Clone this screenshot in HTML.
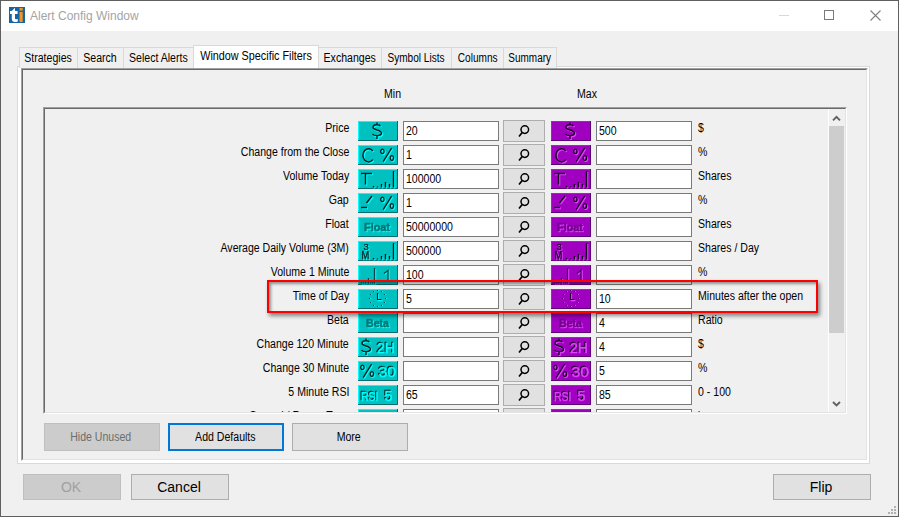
<!DOCTYPE html>
<html><head><meta charset="utf-8"><style>
*{box-sizing:border-box;margin:0;padding:0}
html,body{width:899px;height:517px;overflow:hidden;background:#f0f0f0;font-family:"Liberation Sans",sans-serif;position:relative}
.a{position:absolute}
.t{display:inline-block;transform:scaleX(0.88);white-space:nowrap}
.win{position:absolute;left:0;top:0;width:899px;height:517px;background:#f0f0f0;overflow:hidden}
.title{position:absolute;left:1px;top:1px;width:897px;height:30px;background:#fff}
.ttxt{position:absolute;left:29px;top:8px;font-size:12px;color:#a4a4a4;line-height:14px;white-space:nowrap}
.tab{position:absolute;top:47px;height:21px;border:1px solid #d9d9d9;border-bottom:none;background:#f0f0f0;font-size:12px;line-height:14px;padding-top:3px;text-align:center;white-space:nowrap;color:#000}
.tab.sel{top:45px;height:23px;background:#fff;padding-top:3px;z-index:2}
.lab{position:absolute;right:550px;font-size:12px;line-height:14px;padding-top:0px;white-space:nowrap;color:#000;text-align:right}
.unit{position:absolute;left:698px;font-size:12px;line-height:14px;padding-top:0px;white-space:nowrap;color:#000}
.tb{position:absolute;width:96px;height:20px;border:1px solid #7a7a7a;background:#fff;font-size:12px;line-height:14px;padding:2px 0 0 2px;white-space:nowrap;color:#000}
.mg{position:absolute;left:503px;width:42px;height:22px;border:1px solid #adadad;background:#e1e1e1;overflow:hidden}
.mg svg{left:-1px;top:-1px}
.btn{position:absolute;border:1px solid #adadad;background:#e1e1e1;text-align:center;padding-right:2px;white-space:nowrap;color:#000}
</style></head><body>
<div class="win">
 <div class="title">
  <svg class="a" style="left:8px;top:6px" width="16" height="16"><rect width="16" height="16" fill="#1565a5"/>
   <path d="M1,4 H2.8 L6,0.8 V4 H8.6 V7 H6 V11.3 C6,12.4 7,12.6 8.8,12 V14.4 C5.5,15.5 2.8,15 2.8,12 V7 H1 Z" fill="#fff"/><rect x="10.5" y="1" width="3.2" height="2.6" fill="#f7941d"/><rect x="10.5" y="5" width="3.2" height="10" fill="#f7941d"/></svg>
  <div class="ttxt">Alert Config Window</div>
  <div class="a" style="left:778px;top:14px;width:10px;height:1px;background:#d9d9d9"></div>
  <div class="a" style="left:823px;top:9px;width:10px;height:10px;border:1px solid #7a7a7a"></div>
  <svg class="a" style="left:868px;top:8px" width="14" height="14"><path d="M1.5,1.5 L11.5,11.5 M11.5,1.5 L1.5,11.5" stroke="#7f7f7f" stroke-width="1.1"/></svg>
 </div>
 <!-- tab control border -->
 <div class="a" style="left:17px;top:66px;width:853px;height:398px;border:1px solid #d9d9d9;background:#fff"></div>
 <div class="tab" style="left:19px;width:59px"><span class="t" style="transform-origin:center">Strategies</span></div>
<div class="tab" style="left:77px;width:47px"><span class="t" style="transform-origin:center">Search</span></div>
<div class="tab" style="left:123px;width:71px"><span class="t" style="transform-origin:center">Select Alerts</span></div>
<div class="tab" style="left:318px;width:64px"><span class="t" style="transform-origin:center">Exchanges</span></div>
<div class="tab" style="left:381px;width:71px"><span class="t" style="transform-origin:center;transform:scaleX(0.84)">Symbol Lists</span></div>
<div class="tab" style="left:451px;width:53px"><span class="t" style="transform-origin:center;transform:scaleX(0.84)">Columns</span></div>
<div class="tab" style="left:503px;width:54px"><span class="t" style="transform-origin:center;transform:scaleX(0.83)">Summary</span></div>
 <div class="tab sel" style="left:193px;width:126px"><span class="t" style="transform-origin:center;transform:scaleX(0.9)">Window Specific Filters</span></div>
 <!-- fixed3d panel in tab page -->
 <div class="a" style="left:21px;top:68px;width:847px;height:393px;border:1px solid;border-color:#a0a0a0 #fff #fff #a0a0a0;z-index:3;background:#f0f0f0"></div>
 <div class="a" style="left:22px;top:69px;width:845px;height:391px;border:1px solid;border-color:#696969 #e3e3e3 #e3e3e3 #696969;z-index:3"></div>
 <div class="a" style="left:384px;top:87px;font-size:12px;line-height:14px;z-index:4"><span class="t" style="transform-origin:left">Min</span></div>
 <div class="a" style="left:577px;top:87px;font-size:12px;line-height:14px;z-index:4"><span class="t" style="transform-origin:left">Max</span></div>
 <div class="a" style="left:0;top:0;width:899px;height:517px;z-index:5">
 <!-- scroll panel -->
 <div class="a" style="left:43px;top:107px;width:804px;height:307px;border:1px solid;border-color:#a0a0a0 #fff #fff #a0a0a0"></div>
 <div class="a" style="left:44px;top:108px;width:802px;height:305px;border:1px solid;border-color:#696969 #e3e3e3 #e3e3e3 #696969"></div>
 <div class="a" style="left:45px;top:109px;width:783px;height:303px;overflow:hidden">
  <div class="a" style="left:-45px;top:-109px;width:899px;height:517px">
<div class="lab" style="top:121px"><span class="t" style="transform-origin:right">Price</span></div>
<svg class="a" style="left:358px;top:121px;will-change:transform" width="40" height="20" font-family="Liberation Sans"><rect width="40" height="20" fill="#00c0c0"/><path d="M0.5,19 V0.5 H39" stroke="#00ffff" fill="none"/><path d="M0,19.5 H39.5 V0" stroke="#006e6e" fill="none"/><path d="M22.5,5.2 C21.5,3.2 15.0,3 15.0,6.5 C15.0,9.2 23.5,8.8 23.5,12 C23.5,15.3 16.0,15.4 14.5,13 M19.0,1.5 V3.6 M19.0,15 V18" transform="translate(0.9,0.9)" stroke="#00ffff" stroke-width="1.7999999999999998" fill="none"/><path d="M22.5,5.2 C21.5,3.2 15.0,3 15.0,6.5 C15.0,9.2 23.5,8.8 23.5,12 C23.5,15.3 16.0,15.4 14.5,13 M19.0,1.5 V3.6 M19.0,15 V18" stroke="#001e1e" stroke-width="1.4" fill="none"/></svg>
<div class="tb" style="left:403px;top:121px"><span class="t" style="transform-origin:left">20</span></div>
<div class="mg" style="top:120px"><svg class="a" style="left:0;top:0" width="43" height="22"><circle cx="20.8" cy="8.6" r="3.8" stroke="#000" stroke-width="1.5" fill="none"/><path d="M18.2,11.4 L15,15.6" stroke="#000" stroke-width="1.6"/></svg></div>
<svg class="a" style="left:551px;top:121px;will-change:transform" width="40" height="20" font-family="Liberation Sans"><rect width="40" height="20" fill="#a000c0"/><path d="M0.5,19 V0.5 H39" stroke="#d000ff" fill="none"/><path d="M0,19.5 H39.5 V0" stroke="#5e0078" fill="none"/><path d="M22.5,5.2 C21.5,3.2 15.0,3 15.0,6.5 C15.0,9.2 23.5,8.8 23.5,12 C23.5,15.3 16.0,15.4 14.5,13 M19.0,1.5 V3.6 M19.0,15 V18" transform="translate(0.9,0.9)" stroke="#e040ff" stroke-width="1.7999999999999998" fill="none"/><path d="M22.5,5.2 C21.5,3.2 15.0,3 15.0,6.5 C15.0,9.2 23.5,8.8 23.5,12 C23.5,15.3 16.0,15.4 14.5,13 M19.0,1.5 V3.6 M19.0,15 V18" stroke="#1e0028" stroke-width="1.4" fill="none"/></svg>
<div class="tb" style="left:596px;top:121px"><span class="t" style="transform-origin:left">500</span></div>
<div class="unit" style="top:121px"><span class="t" style="transform-origin:left">$</span></div>
<div class="lab" style="top:145px"><span class="t" style="transform-origin:right">Change from the Close</span></div>
<svg class="a" style="left:358px;top:145px;will-change:transform" width="40" height="20" font-family="Liberation Sans"><rect width="40" height="20" fill="#00c0c0"/><path d="M0.5,19 V0.5 H39" stroke="#00ffff" fill="none"/><path d="M0,19.5 H39.5 V0" stroke="#006e6e" fill="none"/><path d="M14.8,6 A5.6,6.6 0 1 0 14.8,14.6" transform="translate(0.9,0.9)" stroke="#00ffff" stroke-width="1.9" fill="none"/><path d="M14.8,6 A5.6,6.6 0 1 0 14.8,14.6" stroke="#001e1e" stroke-width="1.5" fill="none"/><path d="M24.4,4.1 a1.7,2.3 0 1 0 0.01,0 Z M25.2,16.6 L33.6,3.2 M33.9,10.7 a1.7,2.3 0 1 0 0.01,0 Z" transform="translate(0.9,0.9)" stroke="#00ffff" stroke-width="1.7000000000000002" fill="none"/><path d="M24.4,4.1 a1.7,2.3 0 1 0 0.01,0 Z M25.2,16.6 L33.6,3.2 M33.9,10.7 a1.7,2.3 0 1 0 0.01,0 Z" stroke="#001e1e" stroke-width="1.3" fill="none"/></svg>
<div class="tb" style="left:403px;top:145px"><span class="t" style="transform-origin:left">1</span></div>
<div class="mg" style="top:144px"><svg class="a" style="left:0;top:0" width="43" height="22"><circle cx="20.8" cy="8.6" r="3.8" stroke="#000" stroke-width="1.5" fill="none"/><path d="M18.2,11.4 L15,15.6" stroke="#000" stroke-width="1.6"/></svg></div>
<svg class="a" style="left:551px;top:145px;will-change:transform" width="40" height="20" font-family="Liberation Sans"><rect width="40" height="20" fill="#a000c0"/><path d="M0.5,19 V0.5 H39" stroke="#d000ff" fill="none"/><path d="M0,19.5 H39.5 V0" stroke="#5e0078" fill="none"/><path d="M14.8,6 A5.6,6.6 0 1 0 14.8,14.6" transform="translate(0.9,0.9)" stroke="#e040ff" stroke-width="1.9" fill="none"/><path d="M14.8,6 A5.6,6.6 0 1 0 14.8,14.6" stroke="#1e0028" stroke-width="1.5" fill="none"/><path d="M24.4,4.1 a1.7,2.3 0 1 0 0.01,0 Z M25.2,16.6 L33.6,3.2 M33.9,10.7 a1.7,2.3 0 1 0 0.01,0 Z" transform="translate(0.9,0.9)" stroke="#e040ff" stroke-width="1.7000000000000002" fill="none"/><path d="M24.4,4.1 a1.7,2.3 0 1 0 0.01,0 Z M25.2,16.6 L33.6,3.2 M33.9,10.7 a1.7,2.3 0 1 0 0.01,0 Z" stroke="#1e0028" stroke-width="1.3" fill="none"/></svg>
<div class="tb" style="left:596px;top:145px"><span class="t" style="transform-origin:left"></span></div>
<div class="unit" style="top:145px"><span class="t" style="transform-origin:left">%</span></div>
<div class="lab" style="top:169px"><span class="t" style="transform-origin:right">Volume Today</span></div>
<svg class="a" style="left:358px;top:169px;will-change:transform" width="40" height="20" font-family="Liberation Sans"><rect width="40" height="20" fill="#00c0c0"/><path d="M0.5,19 V0.5 H39" stroke="#00ffff" fill="none"/><path d="M0,19.5 H39.5 V0" stroke="#006e6e" fill="none"/><path d="M3,4.5 H14 M7.5,5 V15.5 M15.5,17 V18.5 M19.5,17.5 V18.5 M23.5,15 V18.5 M27.5,13 V18.5 M31.5,15 V18.5 M35.5,2 V18.5" transform="translate(0.9,0.9)" stroke="#00ffff" stroke-width="1.7999999999999998" fill="none"/><path d="M3,4.5 H14 M7.5,5 V15.5 M15.5,17 V18.5 M19.5,17.5 V18.5 M23.5,15 V18.5 M27.5,13 V18.5 M31.5,15 V18.5 M35.5,2 V18.5" stroke="#001e1e" stroke-width="1.4" fill="none"/></svg>
<div class="tb" style="left:403px;top:169px"><span class="t" style="transform-origin:left">100000</span></div>
<div class="mg" style="top:168px"><svg class="a" style="left:0;top:0" width="43" height="22"><circle cx="20.8" cy="8.6" r="3.8" stroke="#000" stroke-width="1.5" fill="none"/><path d="M18.2,11.4 L15,15.6" stroke="#000" stroke-width="1.6"/></svg></div>
<svg class="a" style="left:551px;top:169px;will-change:transform" width="40" height="20" font-family="Liberation Sans"><rect width="40" height="20" fill="#a000c0"/><path d="M0.5,19 V0.5 H39" stroke="#d000ff" fill="none"/><path d="M0,19.5 H39.5 V0" stroke="#5e0078" fill="none"/><path d="M3,4.5 H14 M7.5,5 V15.5 M15.5,17 V18.5 M19.5,17.5 V18.5 M23.5,15 V18.5 M27.5,13 V18.5 M31.5,15 V18.5 M35.5,2 V18.5" transform="translate(0.9,0.9)" stroke="#e040ff" stroke-width="1.7999999999999998" fill="none"/><path d="M3,4.5 H14 M7.5,5 V15.5 M15.5,17 V18.5 M19.5,17.5 V18.5 M23.5,15 V18.5 M27.5,13 V18.5 M31.5,15 V18.5 M35.5,2 V18.5" stroke="#1e0028" stroke-width="1.4" fill="none"/></svg>
<div class="tb" style="left:596px;top:169px"><span class="t" style="transform-origin:left"></span></div>
<div class="unit" style="top:169px"><span class="t" style="transform-origin:left">Shares</span></div>
<div class="lab" style="top:193px"><span class="t" style="transform-origin:right">Gap</span></div>
<svg class="a" style="left:358px;top:193px;will-change:transform" width="40" height="20" font-family="Liberation Sans"><rect width="40" height="20" fill="#00c0c0"/><path d="M0.5,19 V0.5 H39" stroke="#00ffff" fill="none"/><path d="M0,19.5 H39.5 V0" stroke="#006e6e" fill="none"/><path d="M3,14.5 H9 M8.5,10 L14,3" transform="translate(0.9,0.9)" stroke="#00ffff" stroke-width="1.9" fill="none"/><path d="M3,14.5 H9 M8.5,10 L14,3" stroke="#001e1e" stroke-width="1.5" fill="none"/><path d="M24.4,4.1 a1.7,2.3 0 1 0 0.01,0 Z M25.2,16.6 L33.6,3.2 M33.9,10.7 a1.7,2.3 0 1 0 0.01,0 Z" transform="translate(0.9,0.9)" stroke="#00ffff" stroke-width="1.7000000000000002" fill="none"/><path d="M24.4,4.1 a1.7,2.3 0 1 0 0.01,0 Z M25.2,16.6 L33.6,3.2 M33.9,10.7 a1.7,2.3 0 1 0 0.01,0 Z" stroke="#001e1e" stroke-width="1.3" fill="none"/></svg>
<div class="tb" style="left:403px;top:193px"><span class="t" style="transform-origin:left">1</span></div>
<div class="mg" style="top:192px"><svg class="a" style="left:0;top:0" width="43" height="22"><circle cx="20.8" cy="8.6" r="3.8" stroke="#000" stroke-width="1.5" fill="none"/><path d="M18.2,11.4 L15,15.6" stroke="#000" stroke-width="1.6"/></svg></div>
<svg class="a" style="left:551px;top:193px;will-change:transform" width="40" height="20" font-family="Liberation Sans"><rect width="40" height="20" fill="#a000c0"/><path d="M0.5,19 V0.5 H39" stroke="#d000ff" fill="none"/><path d="M0,19.5 H39.5 V0" stroke="#5e0078" fill="none"/><path d="M3,14.5 H9 M8.5,10 L14,3" transform="translate(0.9,0.9)" stroke="#e040ff" stroke-width="1.9" fill="none"/><path d="M3,14.5 H9 M8.5,10 L14,3" stroke="#1e0028" stroke-width="1.5" fill="none"/><path d="M24.4,4.1 a1.7,2.3 0 1 0 0.01,0 Z M25.2,16.6 L33.6,3.2 M33.9,10.7 a1.7,2.3 0 1 0 0.01,0 Z" transform="translate(0.9,0.9)" stroke="#e040ff" stroke-width="1.7000000000000002" fill="none"/><path d="M24.4,4.1 a1.7,2.3 0 1 0 0.01,0 Z M25.2,16.6 L33.6,3.2 M33.9,10.7 a1.7,2.3 0 1 0 0.01,0 Z" stroke="#1e0028" stroke-width="1.3" fill="none"/></svg>
<div class="tb" style="left:596px;top:193px"><span class="t" style="transform-origin:left"></span></div>
<div class="unit" style="top:193px"><span class="t" style="transform-origin:left">%</span></div>
<div class="lab" style="top:217px"><span class="t" style="transform-origin:right">Float</span></div>
<svg class="a" style="left:358px;top:217px;will-change:transform" width="40" height="20" font-family="Liberation Sans"><rect width="40" height="20" fill="#00c0c0"/><path d="M0.5,19 V0.5 H39" stroke="#00ffff" fill="none"/><path d="M0,19.5 H39.5 V0" stroke="#006e6e" fill="none"/><text x="7" y="15" fill="#00ffff" stroke="#00ffff" stroke-width="0.5" font-size="11.5" font-weight="bold" text-anchor="start" textLength="26" lengthAdjust="spacingAndGlyphs">Float</text><text x="6" y="14" fill="#007676" stroke="#007676" stroke-width="0.5" font-size="11.5" font-weight="bold" text-anchor="start" textLength="26" lengthAdjust="spacingAndGlyphs">Float</text></svg>
<div class="tb" style="left:403px;top:217px"><span class="t" style="transform-origin:left">50000000</span></div>
<div class="mg" style="top:216px"><svg class="a" style="left:0;top:0" width="43" height="22"><circle cx="20.8" cy="8.6" r="3.8" stroke="#000" stroke-width="1.5" fill="none"/><path d="M18.2,11.4 L15,15.6" stroke="#000" stroke-width="1.6"/></svg></div>
<svg class="a" style="left:551px;top:217px;will-change:transform" width="40" height="20" font-family="Liberation Sans"><rect width="40" height="20" fill="#a000c0"/><path d="M0.5,19 V0.5 H39" stroke="#d000ff" fill="none"/><path d="M0,19.5 H39.5 V0" stroke="#5e0078" fill="none"/><text x="7" y="15" fill="#e040ff" stroke="#e040ff" stroke-width="0.5" font-size="11.5" font-weight="bold" text-anchor="start" textLength="26" lengthAdjust="spacingAndGlyphs">Float</text><text x="6" y="14" fill="#74008e" stroke="#74008e" stroke-width="0.5" font-size="11.5" font-weight="bold" text-anchor="start" textLength="26" lengthAdjust="spacingAndGlyphs">Float</text></svg>
<div class="tb" style="left:596px;top:217px"><span class="t" style="transform-origin:left"></span></div>
<div class="unit" style="top:217px"><span class="t" style="transform-origin:left">Shares</span></div>
<div class="lab" style="top:241px"><span class="t" style="transform-origin:right">Average Daily Volume (3M)</span></div>
<svg class="a" style="left:358px;top:241px;will-change:transform" width="40" height="20" font-family="Liberation Sans"><rect width="40" height="20" fill="#00c0c0"/><path d="M0.5,19 V0.5 H39" stroke="#00ffff" fill="none"/><path d="M0,19.5 H39.5 V0" stroke="#006e6e" fill="none"/><text x="6.5" y="10" fill="#00ffff" stroke="#00ffff" stroke-width="0.2" font-size="9.5" font-weight="normal" text-anchor="start">3</text><text x="5.5" y="9" fill="#001e1e" stroke="#001e1e" stroke-width="0.2" font-size="9.5" font-weight="normal" text-anchor="start">3</text><text x="4.5" y="19" fill="#00ffff" stroke="#00ffff" stroke-width="0.3" font-size="10" font-weight="normal" text-anchor="start" textLength="7.8" lengthAdjust="spacingAndGlyphs">M</text><text x="3.5" y="18" fill="#001e1e" stroke="#001e1e" stroke-width="0.3" font-size="10" font-weight="normal" text-anchor="start" textLength="7.8" lengthAdjust="spacingAndGlyphs">M</text><path d="M15.5,17 V18.5 M19.5,17.5 V18.5 M23.5,15 V18.5 M27.5,13 V18.5 M31.5,15 V18.5 M35.5,2 V18.5" transform="translate(0.9,0.9)" stroke="#00ffff" stroke-width="1.7999999999999998" fill="none"/><path d="M15.5,17 V18.5 M19.5,17.5 V18.5 M23.5,15 V18.5 M27.5,13 V18.5 M31.5,15 V18.5 M35.5,2 V18.5" stroke="#001e1e" stroke-width="1.4" fill="none"/></svg>
<div class="tb" style="left:403px;top:241px"><span class="t" style="transform-origin:left">500000</span></div>
<div class="mg" style="top:240px"><svg class="a" style="left:0;top:0" width="43" height="22"><circle cx="20.8" cy="8.6" r="3.8" stroke="#000" stroke-width="1.5" fill="none"/><path d="M18.2,11.4 L15,15.6" stroke="#000" stroke-width="1.6"/></svg></div>
<svg class="a" style="left:551px;top:241px;will-change:transform" width="40" height="20" font-family="Liberation Sans"><rect width="40" height="20" fill="#a000c0"/><path d="M0.5,19 V0.5 H39" stroke="#d000ff" fill="none"/><path d="M0,19.5 H39.5 V0" stroke="#5e0078" fill="none"/><text x="6.5" y="10" fill="#e040ff" stroke="#e040ff" stroke-width="0.2" font-size="9.5" font-weight="normal" text-anchor="start">3</text><text x="5.5" y="9" fill="#1e0028" stroke="#1e0028" stroke-width="0.2" font-size="9.5" font-weight="normal" text-anchor="start">3</text><text x="4.5" y="19" fill="#e040ff" stroke="#e040ff" stroke-width="0.3" font-size="10" font-weight="normal" text-anchor="start" textLength="7.8" lengthAdjust="spacingAndGlyphs">M</text><text x="3.5" y="18" fill="#1e0028" stroke="#1e0028" stroke-width="0.3" font-size="10" font-weight="normal" text-anchor="start" textLength="7.8" lengthAdjust="spacingAndGlyphs">M</text><path d="M15.5,17 V18.5 M19.5,17.5 V18.5 M23.5,15 V18.5 M27.5,13 V18.5 M31.5,15 V18.5 M35.5,2 V18.5" transform="translate(0.9,0.9)" stroke="#e040ff" stroke-width="1.7999999999999998" fill="none"/><path d="M15.5,17 V18.5 M19.5,17.5 V18.5 M23.5,15 V18.5 M27.5,13 V18.5 M31.5,15 V18.5 M35.5,2 V18.5" stroke="#1e0028" stroke-width="1.4" fill="none"/></svg>
<div class="tb" style="left:596px;top:241px"><span class="t" style="transform-origin:left"></span></div>
<div class="unit" style="top:241px"><span class="t" style="transform-origin:left">Shares / Day</span></div>
<div class="lab" style="top:265px"><span class="t" style="transform-origin:right">Volume 1 Minute</span></div>
<svg class="a" style="left:358px;top:265px;will-change:transform" width="40" height="20" font-family="Liberation Sans"><rect width="40" height="20" fill="#00c0c0"/><path d="M0.5,19 V0.5 H39" stroke="#00ffff" fill="none"/><path d="M0,19.5 H39.5 V0" stroke="#006e6e" fill="none"/><path d="M3.5,17.5 V18.5 M5.5,17.5 V18.5 M7.5,17.5 V18.5 M10.5,13 V18.5 M12.5,17.5 V18.5 M14.5,17.5 V18.5 M16.5,3 V18.5 M26,8.5 L30,5.5 V15.5" transform="translate(0.9,0.9)" stroke="#00ffff" stroke-width="1.7000000000000002" fill="none"/><path d="M3.5,17.5 V18.5 M5.5,17.5 V18.5 M7.5,17.5 V18.5 M10.5,13 V18.5 M12.5,17.5 V18.5 M14.5,17.5 V18.5 M16.5,3 V18.5 M26,8.5 L30,5.5 V15.5" stroke="#004848" stroke-width="1.3" fill="none"/></svg>
<div class="tb" style="left:403px;top:265px"><span class="t" style="transform-origin:left">100</span></div>
<div class="mg" style="top:264px"><svg class="a" style="left:0;top:0" width="43" height="22"><circle cx="20.8" cy="8.6" r="3.8" stroke="#000" stroke-width="1.5" fill="none"/><path d="M18.2,11.4 L15,15.6" stroke="#000" stroke-width="1.6"/></svg></div>
<svg class="a" style="left:551px;top:265px;will-change:transform" width="40" height="20" font-family="Liberation Sans"><rect width="40" height="20" fill="#a000c0"/><path d="M0.5,19 V0.5 H39" stroke="#d000ff" fill="none"/><path d="M0,19.5 H39.5 V0" stroke="#5e0078" fill="none"/><path d="M3.5,17.5 V18.5 M5.5,17.5 V18.5 M7.5,17.5 V18.5 M10.5,13 V18.5 M12.5,17.5 V18.5 M14.5,17.5 V18.5 M16.5,3 V18.5 M26,8.5 L30,5.5 V15.5" transform="translate(0.9,0.9)" stroke="#e040ff" stroke-width="1.7000000000000002" fill="none"/><path d="M3.5,17.5 V18.5 M5.5,17.5 V18.5 M7.5,17.5 V18.5 M10.5,13 V18.5 M12.5,17.5 V18.5 M14.5,17.5 V18.5 M16.5,3 V18.5 M26,8.5 L30,5.5 V15.5" stroke="#480060" stroke-width="1.3" fill="none"/></svg>
<div class="tb" style="left:596px;top:265px"><span class="t" style="transform-origin:left"></span></div>
<div class="unit" style="top:265px"><span class="t" style="transform-origin:left">%</span></div>
<div class="lab" style="top:289px"><span class="t" style="transform-origin:right">Time of Day</span></div>
<svg class="a" style="left:358px;top:289px;will-change:transform" width="40" height="20" font-family="Liberation Sans"><rect width="40" height="20" fill="#00c0c0"/><path d="M0.5,19 V0.5 H39" stroke="#00ffff" fill="none"/><path d="M0,19.5 H39.5 V0" stroke="#006e6e" fill="none"/><rect x="28.0" y="9.0" width="1" height="1" fill="#00ffff"/><rect x="27.0" y="9.0" width="1" height="1" fill="#004848"/><rect x="26.9" y="13.0" width="1" height="1" fill="#00ffff"/><rect x="25.9" y="13.0" width="1" height="1" fill="#004848"/><rect x="24.0" y="15.9" width="1" height="1" fill="#00ffff"/><rect x="23.0" y="15.9" width="1" height="1" fill="#004848"/><rect x="20.0" y="17.0" width="1" height="1" fill="#00ffff"/><rect x="19.0" y="17.0" width="1" height="1" fill="#004848"/><rect x="16.0" y="15.9" width="1" height="1" fill="#00ffff"/><rect x="15.0" y="15.9" width="1" height="1" fill="#004848"/><rect x="13.1" y="13.0" width="1" height="1" fill="#00ffff"/><rect x="12.1" y="13.0" width="1" height="1" fill="#004848"/><rect x="12.0" y="9.0" width="1" height="1" fill="#00ffff"/><rect x="11.0" y="9.0" width="1" height="1" fill="#004848"/><rect x="13.1" y="5.0" width="1" height="1" fill="#00ffff"/><rect x="12.1" y="5.0" width="1" height="1" fill="#004848"/><rect x="16.0" y="2.1" width="1" height="1" fill="#00ffff"/><rect x="15.0" y="2.1" width="1" height="1" fill="#004848"/><rect x="20.0" y="1.0" width="1" height="1" fill="#00ffff"/><rect x="19.0" y="1.0" width="1" height="1" fill="#004848"/><rect x="24.0" y="2.1" width="1" height="1" fill="#00ffff"/><rect x="23.0" y="2.1" width="1" height="1" fill="#004848"/><rect x="26.9" y="5.0" width="1" height="1" fill="#00ffff"/><rect x="25.9" y="5.0" width="1" height="1" fill="#004848"/><path d="M19.5,4 V10.5 H23.5" transform="translate(0.9,0.9)" stroke="#00ffff" stroke-width="1.5" fill="none"/><path d="M19.5,4 V10.5 H23.5" stroke="#001e1e" stroke-width="1.1" fill="none"/></svg>
<div class="tb" style="left:403px;top:289px"><span class="t" style="transform-origin:left">5</span></div>
<div class="mg" style="top:288px"><svg class="a" style="left:0;top:0" width="43" height="22"><circle cx="20.8" cy="8.6" r="3.8" stroke="#000" stroke-width="1.5" fill="none"/><path d="M18.2,11.4 L15,15.6" stroke="#000" stroke-width="1.6"/></svg></div>
<svg class="a" style="left:551px;top:289px;will-change:transform" width="40" height="20" font-family="Liberation Sans"><rect width="40" height="20" fill="#a000c0"/><path d="M0.5,19 V0.5 H39" stroke="#d000ff" fill="none"/><path d="M0,19.5 H39.5 V0" stroke="#5e0078" fill="none"/><rect x="28.0" y="9.0" width="1" height="1" fill="#e040ff"/><rect x="27.0" y="9.0" width="1" height="1" fill="#480060"/><rect x="26.9" y="13.0" width="1" height="1" fill="#e040ff"/><rect x="25.9" y="13.0" width="1" height="1" fill="#480060"/><rect x="24.0" y="15.9" width="1" height="1" fill="#e040ff"/><rect x="23.0" y="15.9" width="1" height="1" fill="#480060"/><rect x="20.0" y="17.0" width="1" height="1" fill="#e040ff"/><rect x="19.0" y="17.0" width="1" height="1" fill="#480060"/><rect x="16.0" y="15.9" width="1" height="1" fill="#e040ff"/><rect x="15.0" y="15.9" width="1" height="1" fill="#480060"/><rect x="13.1" y="13.0" width="1" height="1" fill="#e040ff"/><rect x="12.1" y="13.0" width="1" height="1" fill="#480060"/><rect x="12.0" y="9.0" width="1" height="1" fill="#e040ff"/><rect x="11.0" y="9.0" width="1" height="1" fill="#480060"/><rect x="13.1" y="5.0" width="1" height="1" fill="#e040ff"/><rect x="12.1" y="5.0" width="1" height="1" fill="#480060"/><rect x="16.0" y="2.1" width="1" height="1" fill="#e040ff"/><rect x="15.0" y="2.1" width="1" height="1" fill="#480060"/><rect x="20.0" y="1.0" width="1" height="1" fill="#e040ff"/><rect x="19.0" y="1.0" width="1" height="1" fill="#480060"/><rect x="24.0" y="2.1" width="1" height="1" fill="#e040ff"/><rect x="23.0" y="2.1" width="1" height="1" fill="#480060"/><rect x="26.9" y="5.0" width="1" height="1" fill="#e040ff"/><rect x="25.9" y="5.0" width="1" height="1" fill="#480060"/><path d="M19.5,4 V10.5 H23.5" transform="translate(0.9,0.9)" stroke="#e040ff" stroke-width="1.5" fill="none"/><path d="M19.5,4 V10.5 H23.5" stroke="#1e0028" stroke-width="1.1" fill="none"/></svg>
<div class="tb" style="left:596px;top:289px"><span class="t" style="transform-origin:left">10</span></div>
<div class="unit" style="top:289px"><span class="t" style="transform-origin:left">Minutes after the open</span></div>
<div class="lab" style="top:313px"><span class="t" style="transform-origin:right">Beta</span></div>
<svg class="a" style="left:358px;top:313px;will-change:transform" width="40" height="20" font-family="Liberation Sans"><rect width="40" height="20" fill="#00c0c0"/><path d="M0.5,19 V0.5 H39" stroke="#00ffff" fill="none"/><path d="M0,19.5 H39.5 V0" stroke="#006e6e" fill="none"/><text x="9" y="15" fill="#00ffff" stroke="#00ffff" stroke-width="0.5" font-size="11.5" font-weight="bold" text-anchor="start" textLength="23" lengthAdjust="spacingAndGlyphs">Beta</text><text x="8" y="14" fill="#007676" stroke="#007676" stroke-width="0.5" font-size="11.5" font-weight="bold" text-anchor="start" textLength="23" lengthAdjust="spacingAndGlyphs">Beta</text></svg>
<div class="tb" style="left:403px;top:313px"><span class="t" style="transform-origin:left"></span></div>
<div class="mg" style="top:312px"><svg class="a" style="left:0;top:0" width="43" height="22"><circle cx="20.8" cy="8.6" r="3.8" stroke="#000" stroke-width="1.5" fill="none"/><path d="M18.2,11.4 L15,15.6" stroke="#000" stroke-width="1.6"/></svg></div>
<svg class="a" style="left:551px;top:313px;will-change:transform" width="40" height="20" font-family="Liberation Sans"><rect width="40" height="20" fill="#a000c0"/><path d="M0.5,19 V0.5 H39" stroke="#d000ff" fill="none"/><path d="M0,19.5 H39.5 V0" stroke="#5e0078" fill="none"/><text x="9" y="15" fill="#e040ff" stroke="#e040ff" stroke-width="0.5" font-size="11.5" font-weight="bold" text-anchor="start" textLength="23" lengthAdjust="spacingAndGlyphs">Beta</text><text x="8" y="14" fill="#74008e" stroke="#74008e" stroke-width="0.5" font-size="11.5" font-weight="bold" text-anchor="start" textLength="23" lengthAdjust="spacingAndGlyphs">Beta</text></svg>
<div class="tb" style="left:596px;top:313px"><span class="t" style="transform-origin:left">4</span></div>
<div class="unit" style="top:313px"><span class="t" style="transform-origin:left">Ratio</span></div>
<div class="lab" style="top:337px"><span class="t" style="transform-origin:right">Change 120 Minute</span></div>
<svg class="a" style="left:358px;top:337px;will-change:transform" width="40" height="20" font-family="Liberation Sans"><rect width="40" height="20" fill="#00c0c0"/><path d="M0.5,19 V0.5 H39" stroke="#00ffff" fill="none"/><path d="M0,19.5 H39.5 V0" stroke="#006e6e" fill="none"/><path d="M11.5,5.2 C10.5,3.2 4.0,3 4.0,6.5 C4.0,9.2 12.5,8.8 12.5,12 C12.5,15.3 5.0,15.4 3.5,13 M8.0,1.5 V3.6 M8.0,15 V18" transform="translate(0.9,0.9)" stroke="#00ffff" stroke-width="1.7999999999999998" fill="none"/><path d="M11.5,5.2 C10.5,3.2 4.0,3 4.0,6.5 C4.0,9.2 12.5,8.8 12.5,12 C12.5,15.3 5.0,15.4 3.5,13 M8.0,1.5 V3.6 M8.0,15 V18" stroke="#001e1e" stroke-width="1.4" fill="none"/><text x="18" y="15" fill="#001e1e" stroke="#001e1e" stroke-width="0.5" font-size="14" font-weight="normal" text-anchor="start" textLength="18" lengthAdjust="spacingAndGlyphs">2H</text><text x="19" y="16" fill="#00ffff" stroke="#00ffff" stroke-width="0.5" font-size="14" font-weight="normal" text-anchor="start" textLength="18" lengthAdjust="spacingAndGlyphs">2H</text></svg>
<div class="tb" style="left:403px;top:337px"><span class="t" style="transform-origin:left"></span></div>
<div class="mg" style="top:336px"><svg class="a" style="left:0;top:0" width="43" height="22"><circle cx="20.8" cy="8.6" r="3.8" stroke="#000" stroke-width="1.5" fill="none"/><path d="M18.2,11.4 L15,15.6" stroke="#000" stroke-width="1.6"/></svg></div>
<svg class="a" style="left:551px;top:337px;will-change:transform" width="40" height="20" font-family="Liberation Sans"><rect width="40" height="20" fill="#a000c0"/><path d="M0.5,19 V0.5 H39" stroke="#d000ff" fill="none"/><path d="M0,19.5 H39.5 V0" stroke="#5e0078" fill="none"/><path d="M11.5,5.2 C10.5,3.2 4.0,3 4.0,6.5 C4.0,9.2 12.5,8.8 12.5,12 C12.5,15.3 5.0,15.4 3.5,13 M8.0,1.5 V3.6 M8.0,15 V18" transform="translate(0.9,0.9)" stroke="#e040ff" stroke-width="1.7999999999999998" fill="none"/><path d="M11.5,5.2 C10.5,3.2 4.0,3 4.0,6.5 C4.0,9.2 12.5,8.8 12.5,12 C12.5,15.3 5.0,15.4 3.5,13 M8.0,1.5 V3.6 M8.0,15 V18" stroke="#1e0028" stroke-width="1.4" fill="none"/><text x="18" y="15" fill="#1e0028" stroke="#1e0028" stroke-width="0.5" font-size="14" font-weight="normal" text-anchor="start" textLength="18" lengthAdjust="spacingAndGlyphs">2H</text><text x="19" y="16" fill="#e040ff" stroke="#e040ff" stroke-width="0.5" font-size="14" font-weight="normal" text-anchor="start" textLength="18" lengthAdjust="spacingAndGlyphs">2H</text></svg>
<div class="tb" style="left:596px;top:337px"><span class="t" style="transform-origin:left">4</span></div>
<div class="unit" style="top:337px"><span class="t" style="transform-origin:left">$</span></div>
<div class="lab" style="top:361px"><span class="t" style="transform-origin:right">Change 30 Minute</span></div>
<svg class="a" style="left:358px;top:361px;will-change:transform" width="40" height="20" font-family="Liberation Sans"><rect width="40" height="20" fill="#00c0c0"/><path d="M0.5,19 V0.5 H39" stroke="#00ffff" fill="none"/><path d="M0,19.5 H39.5 V0" stroke="#006e6e" fill="none"/><path d="M4.4,4.1 a1.7,2.3 0 1 0 0.01,0 Z M5.2,16.6 L13.6,3.2 M13.9,10.7 a1.7,2.3 0 1 0 0.01,0 Z" transform="translate(0.9,0.9)" stroke="#00ffff" stroke-width="1.7000000000000002" fill="none"/><path d="M4.4,4.1 a1.7,2.3 0 1 0 0.01,0 Z M5.2,16.6 L13.6,3.2 M13.9,10.7 a1.7,2.3 0 1 0 0.01,0 Z" stroke="#001e1e" stroke-width="1.3" fill="none"/><text x="19.5" y="15" fill="#001e1e" stroke="#001e1e" stroke-width="0.5" font-size="14" font-weight="normal" text-anchor="start" textLength="17.5" lengthAdjust="spacingAndGlyphs">30</text><text x="20.5" y="16" fill="#00ffff" stroke="#00ffff" stroke-width="0.5" font-size="14" font-weight="normal" text-anchor="start" textLength="17.5" lengthAdjust="spacingAndGlyphs">30</text></svg>
<div class="tb" style="left:403px;top:361px"><span class="t" style="transform-origin:left"></span></div>
<div class="mg" style="top:360px"><svg class="a" style="left:0;top:0" width="43" height="22"><circle cx="20.8" cy="8.6" r="3.8" stroke="#000" stroke-width="1.5" fill="none"/><path d="M18.2,11.4 L15,15.6" stroke="#000" stroke-width="1.6"/></svg></div>
<svg class="a" style="left:551px;top:361px;will-change:transform" width="40" height="20" font-family="Liberation Sans"><rect width="40" height="20" fill="#a000c0"/><path d="M0.5,19 V0.5 H39" stroke="#d000ff" fill="none"/><path d="M0,19.5 H39.5 V0" stroke="#5e0078" fill="none"/><path d="M4.4,4.1 a1.7,2.3 0 1 0 0.01,0 Z M5.2,16.6 L13.6,3.2 M13.9,10.7 a1.7,2.3 0 1 0 0.01,0 Z" transform="translate(0.9,0.9)" stroke="#e040ff" stroke-width="1.7000000000000002" fill="none"/><path d="M4.4,4.1 a1.7,2.3 0 1 0 0.01,0 Z M5.2,16.6 L13.6,3.2 M13.9,10.7 a1.7,2.3 0 1 0 0.01,0 Z" stroke="#1e0028" stroke-width="1.3" fill="none"/><text x="19.5" y="15" fill="#1e0028" stroke="#1e0028" stroke-width="0.5" font-size="14" font-weight="normal" text-anchor="start" textLength="17.5" lengthAdjust="spacingAndGlyphs">30</text><text x="20.5" y="16" fill="#e040ff" stroke="#e040ff" stroke-width="0.5" font-size="14" font-weight="normal" text-anchor="start" textLength="17.5" lengthAdjust="spacingAndGlyphs">30</text></svg>
<div class="tb" style="left:596px;top:361px"><span class="t" style="transform-origin:left">5</span></div>
<div class="unit" style="top:361px"><span class="t" style="transform-origin:left">%</span></div>
<div class="lab" style="top:385px"><span class="t" style="transform-origin:right">5 Minute RSI</span></div>
<svg class="a" style="left:358px;top:385px;will-change:transform" width="40" height="20" font-family="Liberation Sans"><rect width="40" height="20" fill="#00c0c0"/><path d="M0.5,19 V0.5 H39" stroke="#00ffff" fill="none"/><path d="M0,19.5 H39.5 V0" stroke="#006e6e" fill="none"/><text x="2" y="15" fill="#001e1e" stroke="#001e1e" stroke-width="0.5" font-size="13" font-weight="normal" text-anchor="start" textLength="17.5" lengthAdjust="spacingAndGlyphs">RSI</text><text x="3" y="16" fill="#00ffff" stroke="#00ffff" stroke-width="0.5" font-size="13" font-weight="normal" text-anchor="start" textLength="17.5" lengthAdjust="spacingAndGlyphs">RSI</text><text x="25.5" y="15" fill="#001e1e" stroke="#001e1e" stroke-width="0.5" font-size="14" font-weight="normal" text-anchor="start" textLength="8" lengthAdjust="spacingAndGlyphs">5</text><text x="26.5" y="16" fill="#00ffff" stroke="#00ffff" stroke-width="0.5" font-size="14" font-weight="normal" text-anchor="start" textLength="8" lengthAdjust="spacingAndGlyphs">5</text></svg>
<div class="tb" style="left:403px;top:385px"><span class="t" style="transform-origin:left">65</span></div>
<div class="mg" style="top:384px"><svg class="a" style="left:0;top:0" width="43" height="22"><circle cx="20.8" cy="8.6" r="3.8" stroke="#000" stroke-width="1.5" fill="none"/><path d="M18.2,11.4 L15,15.6" stroke="#000" stroke-width="1.6"/></svg></div>
<svg class="a" style="left:551px;top:385px;will-change:transform" width="40" height="20" font-family="Liberation Sans"><rect width="40" height="20" fill="#a000c0"/><path d="M0.5,19 V0.5 H39" stroke="#d000ff" fill="none"/><path d="M0,19.5 H39.5 V0" stroke="#5e0078" fill="none"/><text x="2" y="15" fill="#1e0028" stroke="#1e0028" stroke-width="0.5" font-size="13" font-weight="normal" text-anchor="start" textLength="17.5" lengthAdjust="spacingAndGlyphs">RSI</text><text x="3" y="16" fill="#e040ff" stroke="#e040ff" stroke-width="0.5" font-size="13" font-weight="normal" text-anchor="start" textLength="17.5" lengthAdjust="spacingAndGlyphs">RSI</text><text x="25.5" y="15" fill="#1e0028" stroke="#1e0028" stroke-width="0.5" font-size="14" font-weight="normal" text-anchor="start" textLength="8" lengthAdjust="spacingAndGlyphs">5</text><text x="26.5" y="16" fill="#e040ff" stroke="#e040ff" stroke-width="0.5" font-size="14" font-weight="normal" text-anchor="start" textLength="8" lengthAdjust="spacingAndGlyphs">5</text></svg>
<div class="tb" style="left:596px;top:385px"><span class="t" style="transform-origin:left">85</span></div>
<div class="unit" style="top:385px"><span class="t" style="transform-origin:left">0 - 100</span></div>
<div class="lab" style="top:409px"><span class="t" style="transform-origin:right">Spread / Range Type</span></div>
<svg class="a" style="left:358px;top:409px;will-change:transform" width="40" height="20" font-family="Liberation Sans"><rect width="40" height="20" fill="#00c0c0"/><path d="M0.5,19 V0.5 H39" stroke="#00ffff" fill="none"/><path d="M0,19.5 H39.5 V0" stroke="#006e6e" fill="none"/></svg>
<div class="tb" style="left:403px;top:409px"><span class="t" style="transform-origin:left"></span></div>
<div class="mg" style="top:408px"><svg class="a" style="left:0;top:0" width="43" height="22"><circle cx="20.8" cy="8.6" r="3.8" stroke="#000" stroke-width="1.5" fill="none"/><path d="M18.2,11.4 L15,15.6" stroke="#000" stroke-width="1.6"/></svg></div>
<svg class="a" style="left:551px;top:409px;will-change:transform" width="40" height="20" font-family="Liberation Sans"><rect width="40" height="20" fill="#a000c0"/><path d="M0.5,19 V0.5 H39" stroke="#d000ff" fill="none"/><path d="M0,19.5 H39.5 V0" stroke="#5e0078" fill="none"/></svg>
<div class="tb" style="left:596px;top:409px"><span class="t" style="transform-origin:left"></span></div>
<div class="unit" style="top:409px"><span class="t" style="transform-origin:left">'</span></div>
  </div>
 </div>
 <!-- red highlight -->
 <div class="a" style="left:267px;top:280px;width:551px;height:33px;border:2px solid #ff0000;box-shadow:2px 3px 4px rgba(0,0,0,0.45), inset 2px 2px 3px rgba(0,0,0,0.4)"></div>
 <!-- scrollbar -->
 <div class="a" style="left:828px;top:109px;width:17px;height:303px;background:#f0f0f0;border-left:1px solid #fff"></div>
 <div class="a" style="left:829px;top:126px;width:15px;height:207px;background:#cdcdcd"></div>
 <svg class="a" style="left:829px;top:110px" width="15" height="16"><path d="M4,10.3 L7.5,6.8 L11,10.3" stroke="#606060" stroke-width="1.9" fill="none"/></svg>
 <svg class="a" style="left:829px;top:396px" width="15" height="16"><path d="M4,6 L7.5,9.5 L11,6" stroke="#606060" stroke-width="1.9" fill="none"/></svg>
 <!-- buttons -->
 <div class="btn" style="left:44px;top:423px;width:116px;height:28px;background:#cccccc;border-color:#bfbfbf;color:#6d6d6d;font-size:12px;line-height:14px;padding-top:6px"><span class="t" style="transform-origin:center">Hide Unused</span></div>
 <div class="btn" style="left:168px;top:423px;width:116px;height:28px;border:2px solid #0078d7;font-size:12px;line-height:14px;padding-top:5px"><span class="t" style="transform-origin:center">Add Defaults</span></div>
 <div class="btn" style="left:292px;top:423px;width:116px;height:28px;font-size:12px;line-height:14px;padding-top:6px"><span class="t" style="transform-origin:center">More</span></div>
 <div class="btn" style="left:23px;top:474px;width:98px;height:26px;background:#cccccc;border-color:#bfbfbf;color:#a0a0a0;font-size:14px;line-height:15px;padding-top:5px">OK</div>
 <div class="btn" style="left:131px;top:474px;width:98px;height:26px;font-size:14px;line-height:15px;padding-top:5px">Cancel</div>
 <div class="btn" style="left:773px;top:474px;width:98px;height:26px;font-size:14px;line-height:15px;padding-top:5px">Flip</div>
 <svg class="a" style="left:884px;top:500px" width="14" height="16" fill="#b0b0b0"><rect x="10" y="6" width="2" height="2"/><rect x="7" y="9" width="2" height="2"/><rect x="10" y="9" width="2" height="2"/><rect x="4" y="12" width="2" height="2"/><rect x="7" y="12" width="2" height="2"/><rect x="10" y="12" width="2" height="2"/></svg>
 </div>
 <div class="a" style="left:0;top:0;width:899px;height:517px;border:1px solid #5f5f5f;z-index:10"></div>
</div>
</body></html>
